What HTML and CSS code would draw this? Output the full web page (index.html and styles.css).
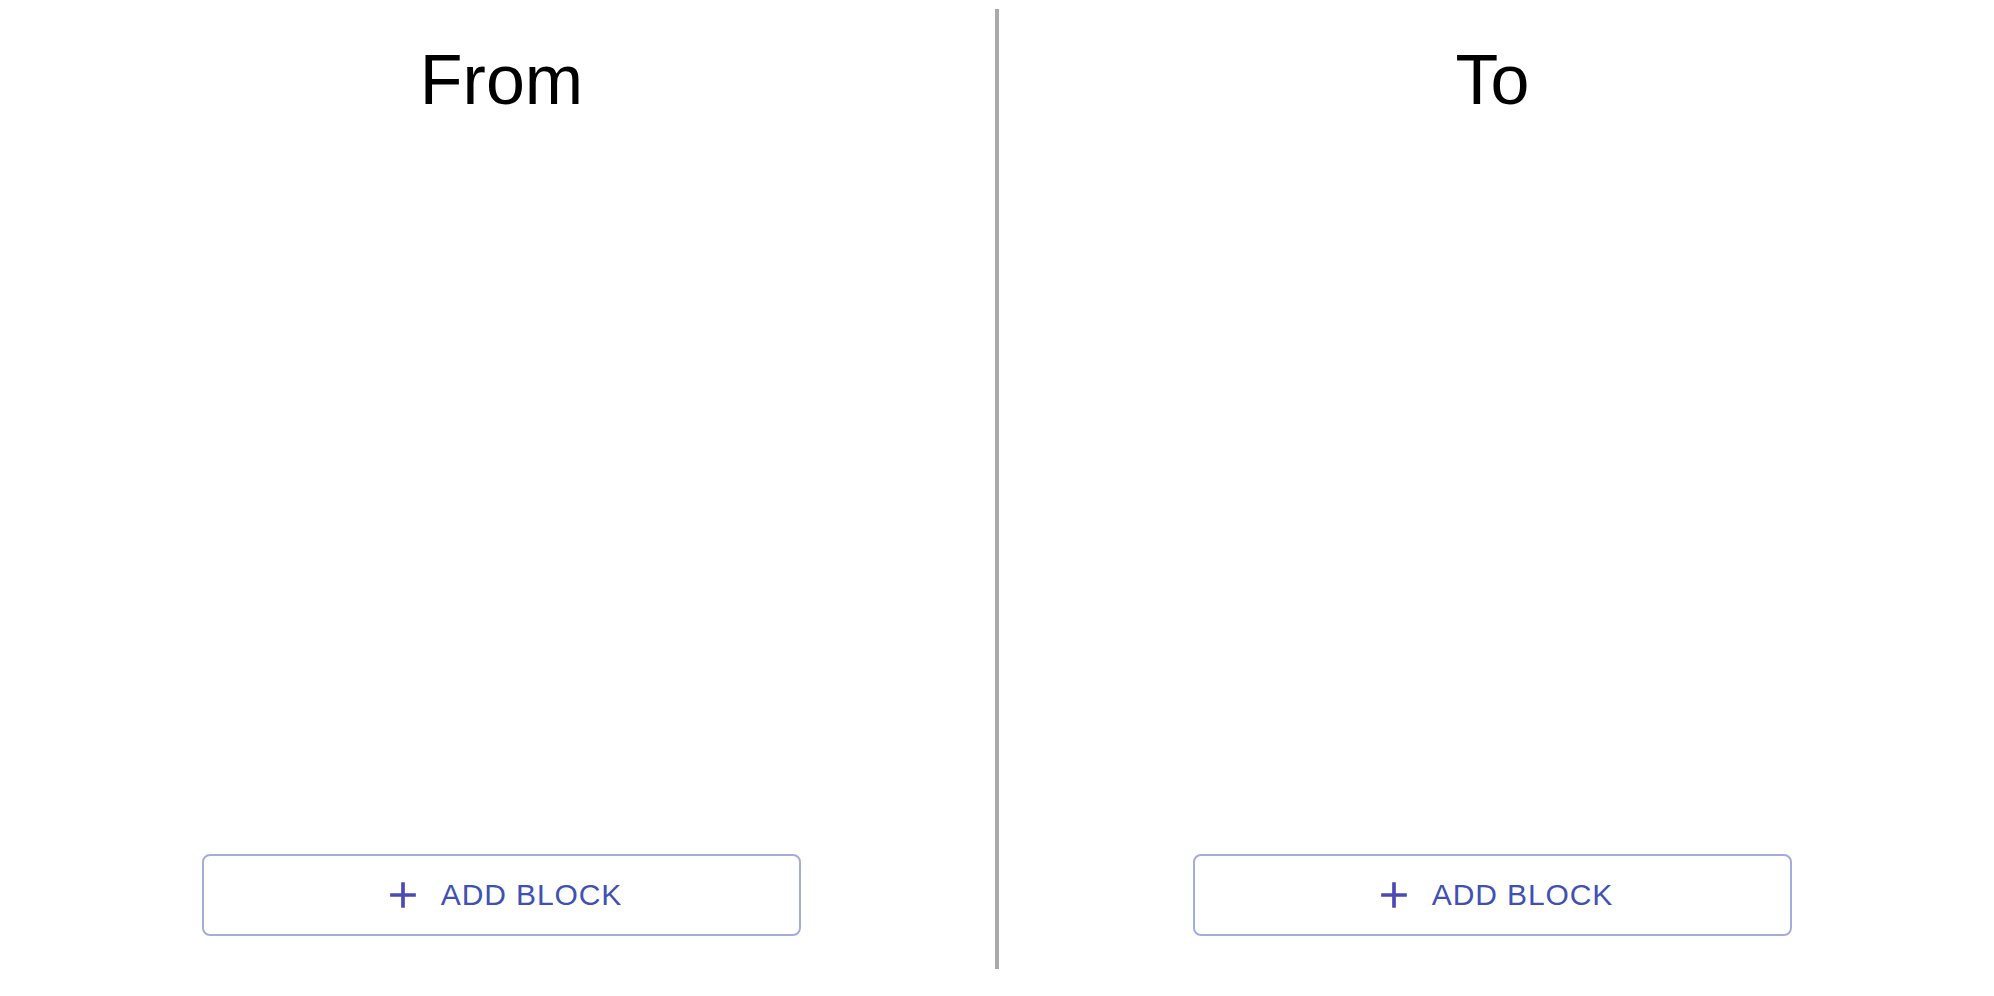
FILE: index.html
```html
<!DOCTYPE html>
<html lang="en">
<head>
<meta charset="utf-8">
<title>From / To</title>
<link rel="stylesheet" href="styles.css">
</head>
<body>
<div class="board">
  <section class="column">
    <h1 class="title">From</h1>
    <div class="spacer"></div>
    <button class="add-btn" type="button">
      <svg class="add-icon" viewBox="0 0 24 24" aria-hidden="true"><path d="M19 13h-6v6h-2v-6H5v-2h6V5h2v6h6v2z"/></svg>
      <span>ADD BLOCK</span>
    </button>
  </section>
  <div class="divider"></div>
  <section class="column">
    <h1 class="title">To</h1>
    <div class="spacer"></div>
    <button class="add-btn" type="button">
      <svg class="add-icon" viewBox="0 0 24 24" aria-hidden="true"><path d="M19 13h-6v6h-2v-6H5v-2h6V5h2v6h6v2z"/></svg>
      <span>ADD BLOCK</span>
    </button>
  </section>
</div>
</body>
</html>
```

FILE: styles.css
```css
html, body {
  background: #ffffff;
}
body {
  margin: 8px;
  font-family: "Liberation Sans", Arial, sans-serif;
}
.board {
  display: grid;
  grid-template-columns: 1fr 4px 1fr;
  height: 961px;
}
.column {
  display: flex;
  flex-direction: column;
  align-items: center;
}
.title {
  margin: 32px 0 0 0;
  font-size: 70px;
  line-height: 80px;
  font-weight: 400;
  color: #000000;
}
.spacer {
  flex: 1;
}
.divider {
  background: #aaaaaa;
  margin-top: 1px;
}
.add-btn {
  box-sizing: border-box;
  width: 599px;
  height: 82px;
  margin-bottom: 33px;
  border: 2px solid #a4acdc;
  border-radius: 8px;
  background: #ffffff;
  display: flex;
  align-items: center;
  justify-content: center;
  font-family: "Liberation Sans", Arial, sans-serif;
  font-size: 30px;
  letter-spacing: 0.9px;
  color: #3f51b5;
  padding: 0;
  cursor: pointer;
}
.add-icon {
  width: 44px;
  height: 44px;
  fill: #4c48b4;
  margin-right: 16px;
  flex: none;
}
```
